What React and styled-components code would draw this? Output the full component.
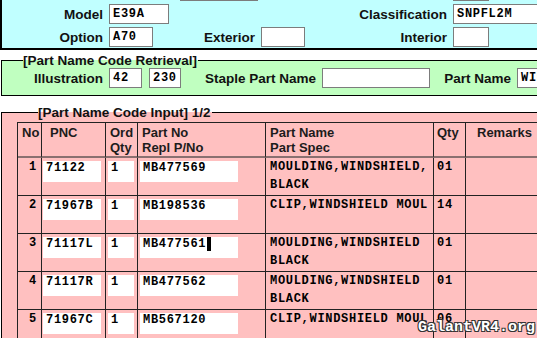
import React from "react";
import styled, { createGlobalStyle } from "styled-components";

const rows = [
  { no: 1, pnc: "71122", ord: "1", part: "MB477569", name: ["MOULDING,WINDSHIELD,", "BLACK"], qty: "01" },
  { no: 2, pnc: "71967B", ord: "1", part: "MB198536", name: ["CLIP,WINDSHIELD MOUL"], qty: "14" },
  { no: 3, pnc: "71117L", ord: "1", part: "MB477561", name: ["MOULDING,WINDSHIELD", "BLACK"], qty: "01", caret: true },
  { no: 4, pnc: "71117R", ord: "1", part: "MB477562", name: ["MOULDING,WINDSHIELD", "BLACK"], qty: "01" },
  { no: 5, pnc: "71967C", ord: "1", part: "MB567120", name: ["CLIP,WINDSHIELD MOUL"], qty: "06" },
];

const headers = [
  { text: ["No"], pad: 4 },
  { text: ["PNC"], pad: 8 },
  { text: ["Ord", "Qty"], pad: 4 },
  { text: ["Part No", "Repl P/No"], pad: 4 },
  { text: ["Part Name", "Part Spec"], pad: 4 },
  { text: ["Qty"], pad: 3 },
  { text: ["Remarks"], pad: 11 },
];

export const App = () => {
  return (
    <Page>
      <GlobalStyle />
      <TopPanel>
        <TopRows>
          <Row>
            <Label $w={178} />
            <Box $w={78} />
            <Label $w={195} />
            <Box $w={36} />
          </Row>
          <Row>
            <Label $w={107}>Model</Label>
            <Box $w={60}>E39A</Box>
            <Label $w={284}>Classification</Label>
            <Box $w={90}>SNPFL2M</Box>
          </Row>
          <Row>
            <Label $w={107}>Option</Label>
            <Box $w={44}>A70</Box>
            <Label $w={108}>Exterior</Label>
            <Box $w={44} />
            <Label $w={148}>Interior</Label>
            <Box $w={36} />
          </Row>
        </TopRows>
      </TopPanel>

      <Group $bg="#c0ffc0" $mt={3} $pad="0 0 7px 0">
        <Legend>[Part Name Code Retrieval]</Legend>
        <Row>
          <Label $w={107}>Illustration</Label>
          <Box $w={33}>42</Box>
          <Box $w={32} $ml={7}>230</Box>
          <Label $w={141}>Staple Part Name</Label>
          <Box $w={108} />
          <Label $w={87}>Part Name</Label>
          <Box $w={100}>WINDSHIELD</Box>
        </Row>
      </Group>

      <Group $bg="#ffc0c0" $mt={9} $pad="2px 0 0 15px">
        <Legend>[Part Name Code Input] 1/2</Legend>
        <Table>
          {headers.map((h, i) => (
            <HeadCell key={i} $pad={h.pad}>
              {h.text.map(t => (
                <div key={t}>{t}</div>
              ))}
            </HeadCell>
          ))}
          {rows.map(r => (
            <React.Fragment key={r.no}>
              <Cell $align="right" $pr={4}>{r.no}</Cell>
              <Cell>
                <CellInput $w={58} $ml={1}>{r.pnc}</CellInput>
              </Cell>
              <Cell>
                <CellInput $w={26} $ml={2}>{r.ord}</CellInput>
              </Cell>
              <Cell>
                <CellInput $w={98} $ml={2}>
                  {r.part}
                  {r.caret && <Caret />}
                </CellInput>
              </Cell>
              <Cell $pl={4}>
                {r.name.map(n => (
                  <div key={n}>{n}</div>
                ))}
              </Cell>
              <Cell $pl={3}>{r.qty}</Cell>
              <Cell />
            </React.Fragment>
          ))}
        </Table>
      </Group>

      <Watermark>GalantVR4.org</Watermark>
    </Page>
  );
};

export default App;

/** Styled components */
const GlobalStyle = createGlobalStyle`
  html, body {
    margin: 0;
    padding: 0;
    background: #fff;
    overflow: hidden;
  }
`;

const Page = styled.div`
  position: relative;
  width: 537px;
  height: 338px;
  overflow: hidden;
  font-family: "Liberation Sans", Arial, sans-serif;
  color: #000;
`;

const TopPanel = styled.div`
  width: 720px;
  height: 50px;
  box-sizing: border-box;
  background: #c0ffff;
  border-left: 2px solid #000;
  border-bottom: 2px solid #000;
  overflow: hidden;
`;

const TopRows = styled.div`
  display: flex;
  flex-direction: column;
  gap: 3px;
  margin-top: -19px;
`;

const Row = styled.div`
  display: flex;
  align-items: center;
  height: 20px;
`;

const Label = styled.span`
  flex: none;
  width: ${p => p.$w}px;
  box-sizing: border-box;
  padding-right: 6px;
  text-align: right;
  font: bold 13.5px "Liberation Sans", Arial, sans-serif;
  color: #111;
  white-space: nowrap;
`;

const Box = styled.div`
  flex: none;
  width: ${p => p.$w}px;
  height: 20px;
  margin-left: ${p => p.$ml || 0}px;
  box-sizing: border-box;
  background: #fff;
  border: 1px solid #7c7c7c;
  padding-left: 3px;
  font: bold 12px/18px "Liberation Mono", monospace;
  letter-spacing: 0.7px;
  white-space: nowrap;
  overflow: hidden;
`;

const Group = styled.fieldset`
  width: 720px;
  box-sizing: border-box;
  margin: ${p => p.$mt}px 0 0 1px;
  padding: ${p => p.$pad};
  border: 1px solid #000;
  background: ${p => p.$bg};
  min-inline-size: 0;
`;

const Legend = styled.legend`
  margin-left: 21px;
  padding: 0 1px 0 0;
  font: bold 13.5px/15px "Liberation Sans", Arial, sans-serif;
  color: #111;
`;

const Table = styled.div`
  display: grid;
  grid-template-columns: 24px 64px 32px 128px 168px 32px 120px;
  grid-template-rows: 35px;
  grid-auto-rows: 38px;
  border-left: 1px solid #222;
  border-top: 1px solid #222;
`;

const HeadCell = styled.div`
  box-sizing: border-box;
  padding: 2px 0 0 ${p => p.$pad}px;
  border-right: 1px solid #222;
  border-bottom: 2px solid #8a7070;
  font: bold 13px/15px "Liberation Sans", Arial, sans-serif;
  color: #1c1c1c;
  white-space: nowrap;
`;

const Cell = styled.div`
  box-sizing: border-box;
  padding-left: ${p => p.$pl || 0}px;
  padding-right: ${p => p.$pr || 0}px;
  text-align: ${p => p.$align || "left"};
  border-right: 1px solid #222;
  border-bottom: 1px solid #222;
  font: bold 12px/18px "Liberation Mono", monospace;
  letter-spacing: 0.7px;
  white-space: nowrap;
  overflow: hidden;
`;

const CellInput = styled.div`
  width: ${p => p.$w}px;
  height: 21px;
  margin: 3px 0 0 ${p => p.$ml}px;
  box-sizing: border-box;
  padding-left: 3px;
  background: #fff;
  line-height: 14px;
  white-space: nowrap;
`;

const Caret = styled.span`
  display: inline-block;
  width: 4px;
  height: 14px;
  margin-left: 1px;
  vertical-align: top;
  background: #000;
`;

const Watermark = styled.div`
  position: absolute;
  right: 2px;
  bottom: 1px;
  font: bold 15px/18px "Liberation Mono", monospace;
  color: #fff;
  text-shadow: 1px 1px 0 #333, -1px -1px 0 #333, 1px -1px 0 #333, -1px 1px 0 #333;
`;
